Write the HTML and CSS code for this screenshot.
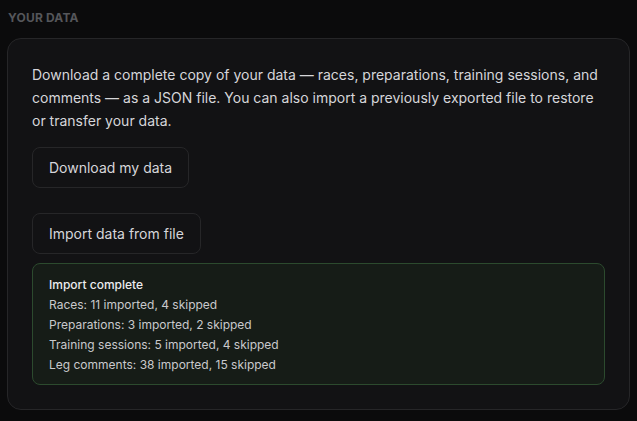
FILE: index.html
```html
<!DOCTYPE html>
<html lang="en">
  <head>
    <meta charset="UTF-8">
    <meta name="viewport" content="width=device-width, initial-scale=1.0">
    <title>Your Data</title>
    <link rel="stylesheet" href="styles.css">
  </head>
  <body>
    <section class="section">
      <h2 class="section-title">Your Data</h2>
      <div class="card">
        <p class="card-text">
          Download a complete copy of your data — races, preparations, training sessions, and
          comments — as a JSON file. You can also import a previously exported file to restore
          or transfer your data.
        </p>
        <div class="actions">
          <button class="btn">Download my data</button>
          <button class="btn">Import data from file</button>
        </div>
        <div class="result">
          <div class="result-title">Import complete</div>
          <div class="result-line">Races: 11 imported, 4 skipped</div>
          <div class="result-line">Preparations: 3 imported, 2 skipped</div>
          <div class="result-line">Training sessions: 5 imported, 4 skipped</div>
          <div class="result-line">Leg comments: 38 imported, 15 skipped</div>
        </div>
      </div>
    </section>
  </body>
</html>
```

FILE: styles.css
```css
:root {
  --background: #0b0b0c;
  --card: #121214;
  --border: #262628;
  --foreground: #d6d6da;
  --muted: #55565a;
  --success-bg: #161c17;
  --success-border: #2c4a2e;
}

* {
  box-sizing: border-box;
}

body {
  margin: 0;
  padding: 10px 7px 0;
  background-color: var(--background);
  font-family: Inter, "Noto Sans", sans-serif;
  color: var(--foreground);
}

.section-title {
  margin: 0 0 12px 1px;
  font-size: 12px;
  font-weight: 700;
  letter-spacing: 0.2px;
  text-transform: uppercase;
  color: var(--muted);
  line-height: 16px;
}

.card {
  width: 623px;
  background-color: var(--card);
  border: 1px solid var(--border);
  border-radius: 14px;
  padding: 24px 24px 24px;
}

.card-text {
  margin: 0 0 15px;
  font-size: 14px;
  line-height: 23px;
}

.actions {
  display: flex;
  flex-direction: column;
  align-items: flex-start;
  gap: 25px;
}

.btn {
  height: 41px;
  padding: 0 16px;
  background-color: var(--card);
  border: 1px solid var(--border);
  border-radius: 8px;
  color: var(--foreground);
  font-family: inherit;
  font-size: 14px;
}

.result {
  margin-top: 9px;
  padding: 11px 16px 9px;
  background-color: var(--success-bg);
  border: 1px solid var(--success-border);
  border-radius: 8px;
  font-size: 12px;
  line-height: 20px;
}

.result-title {
  font-weight: 500;
  color: #ececef;
}

.result-line {
  color: #c9c9cc;
}
```
